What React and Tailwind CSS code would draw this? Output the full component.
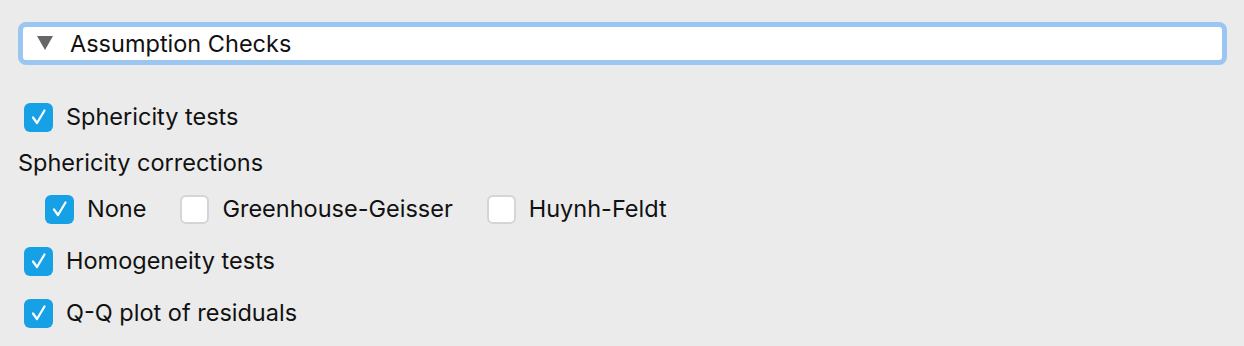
import { useState } from "react";

function Check({ checked, label, onToggle }) {
  return (
    <label className="h-[30px] flex items-center gap-[13px] cursor-pointer select-none" onClick={onToggle}>
      {checked ? (
        <span className="w-[29px] h-[29px] rounded-[6px] bg-[#16a1e7] flex items-center justify-center">
          <svg width="20" height="20" viewBox="0 0 20 20" fill="none">
            <path d="M4 10.5 L8 16 L15.5 3.5" stroke="white" strokeWidth="2.2" strokeLinecap="round" strokeLinejoin="round" />
          </svg>
        </span>
      ) : (
        <span className="w-[29px] h-[29px] rounded-[6px] bg-white border-2 border-[#d5d5d5]" />
      )}
      <span className="text-[23.5px] leading-[30px] text-[#111]">{label}</span>
    </label>
  );
}

function App() {

  const [opts, setOpts] = useState({
    sphericity: true,
    none: true,
    gg: false,
    hf: false,
    homogeneity: true,
    qq: true,
  });

  const toggle = (key) => setOpts({ ...opts, [key]: !opts[key] });

  return (
    <div className="w-[1244px] h-[346px] bg-[#ebebeb] font-['Inter',sans-serif] pt-[22px] pl-[18px] pr-[17px]">

      {/* ===== section header ===== */}
      <div className="h-[43px] border-[5px] border-[#9bc6f1] rounded-[8px] bg-white flex items-center pl-[14px]">
        <svg width="16" height="15" viewBox="0 0 16 15">
          <path d="M0 0 H16 L8 14 Z" fill="#666" />
        </svg>
        <span className="ml-[17px] text-[23.5px] text-[#111]">Assumption Checks</span>
      </div>

      {/* ===== options ===== */}
      <div className="mt-[37px] pl-[6px]">
        <Check checked={opts.sphericity} label="Sphericity tests" onToggle={() => toggle("sphericity")} />
      </div>

      <div className="mt-[16px] text-[23.5px] text-[#111] leading-[30px]">Sphericity corrections</div>

      <div className="mt-[16px] pl-[27px] flex gap-[34px]">
        <Check checked={opts.none} label="None" onToggle={() => toggle("none")} />
        <Check checked={opts.gg} label="Greenhouse-Geisser" onToggle={() => toggle("gg")} />
        <Check checked={opts.hf} label="Huynh-Feldt" onToggle={() => toggle("hf")} />
      </div>

      <div className="mt-[22px] pl-[6px]">
        <Check checked={opts.homogeneity} label="Homogeneity tests" onToggle={() => toggle("homogeneity")} />
      </div>

      <div className="mt-[22px] pl-[6px]">
        <Check checked={opts.qq} label="Q-Q plot of residuals" onToggle={() => toggle("qq")} />
      </div>

    </div>
  );
}

export default App;
